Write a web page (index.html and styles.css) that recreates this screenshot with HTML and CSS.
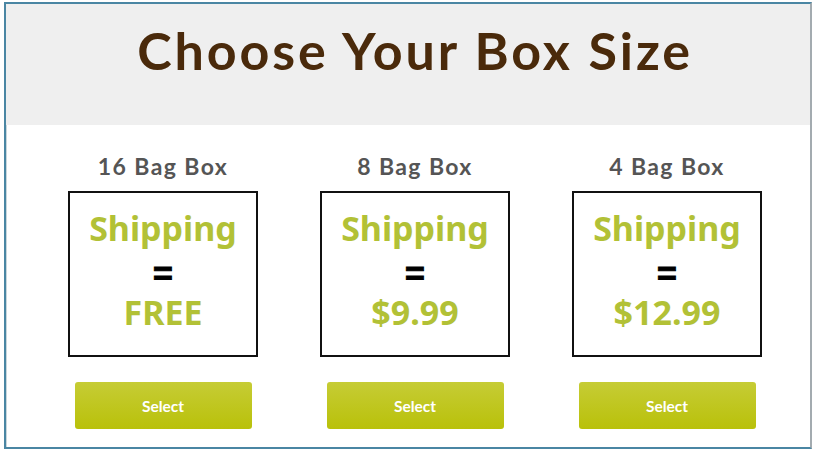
FILE: index.html
```html
<!DOCTYPE html>
<html>
<head>
<meta charset="utf-8">
<link rel="stylesheet" href="styles.css">
</head>
<body>
<div class="frame">
  <header class="hero">
    <h1 class="title">Choose Your Box Size</h1>
  </header>
  <section class="options">
    <div class="option">
      <div class="label">16 Bag Box</div>
      <div class="box">
        <div class="ship">Shipping</div>
        <div class="eq">=</div>
        <div class="price">FREE</div>
      </div>
      <button class="select">Select</button>
    </div>
    <div class="option">
      <div class="label">8 Bag Box</div>
      <div class="box">
        <div class="ship">Shipping</div>
        <div class="eq">=</div>
        <div class="price">$9.99</div>
      </div>
      <button class="select">Select</button>
    </div>
    <div class="option">
      <div class="label">4 Bag Box</div>
      <div class="box">
        <div class="ship">Shipping</div>
        <div class="eq">=</div>
        <div class="price">$12.99</div>
      </div>
      <button class="select">Select</button>
    </div>
  </section>
</div>
</body>
</html>
```

FILE: styles.css
```css
html, body {
  margin: 0;
  padding: 0;
  background: #ffffff;
}

.frame {
  margin: 2px 0 0 4px;
  width: 804px;
  height: 443px;
  border: 2px solid #4a86a3;
  border-right-color: #a3abb0;
  background: #ffffff;
  box-shadow: inset 1px 1px 0 #c9d6dc;
}

.hero {
  height: 121px;
  background: #efefef;
  display: flex;
  align-items: flex-start;
  justify-content: center;
  padding-left: 14px;
  padding-top: 16px;
  box-sizing: border-box;
}

.title {
  margin: 0;
  font-family: "Lato", "Noto Sans", sans-serif;
  font-weight: 700;
  font-size: 52px;
  line-height: 60px;
  color: #4a2a0b;
  letter-spacing: 2.9px;
}

.options {
  display: grid;
  grid-template-columns: repeat(3, 252px);
  padding-left: 31px;
  padding-top: 26px;
}

.option {
  display: flex;
  flex-direction: column;
  align-items: center;
}

.label {
  font-family: "Lato", "Noto Sans", sans-serif;
  font-weight: 700;
  font-size: 23px;
  line-height: 30px;
  color: #555555;
  letter-spacing: 1.4px;
}

.box {
  margin-top: 10px;
  width: 186px;
  height: 148px;
  border: 2px solid #111111;
  display: flex;
  flex-direction: column;
  align-items: center;
  padding-top: 14px;
  box-sizing: content-box;
}

.ship, .price {
  font-family: "Noto Sans", sans-serif;
  font-weight: 700;
  font-size: 34px;
  line-height: 42px;
  color: #b2c136;
}

.price {
  line-height: 38px;
}

.eq {
  font-family: "Liberation Sans", "Noto Sans", sans-serif;
  font-weight: 700;
  font-size: 34px;
  line-height: 39px;
  padding-top: 5px;
  color: #000000;
  -webkit-text-stroke: 1px #000000;
}

.select {
  margin-top: 25px;
  width: 177px;
  height: 47px;
  border: none;
  border-radius: 3px;
  background: linear-gradient(#c6cc35, #b9c10a);
  color: #ffffff;
  font-family: "Lato", "Noto Sans", sans-serif;
  font-weight: 700;
  font-size: 15.5px;
  padding: 0;
}
```
